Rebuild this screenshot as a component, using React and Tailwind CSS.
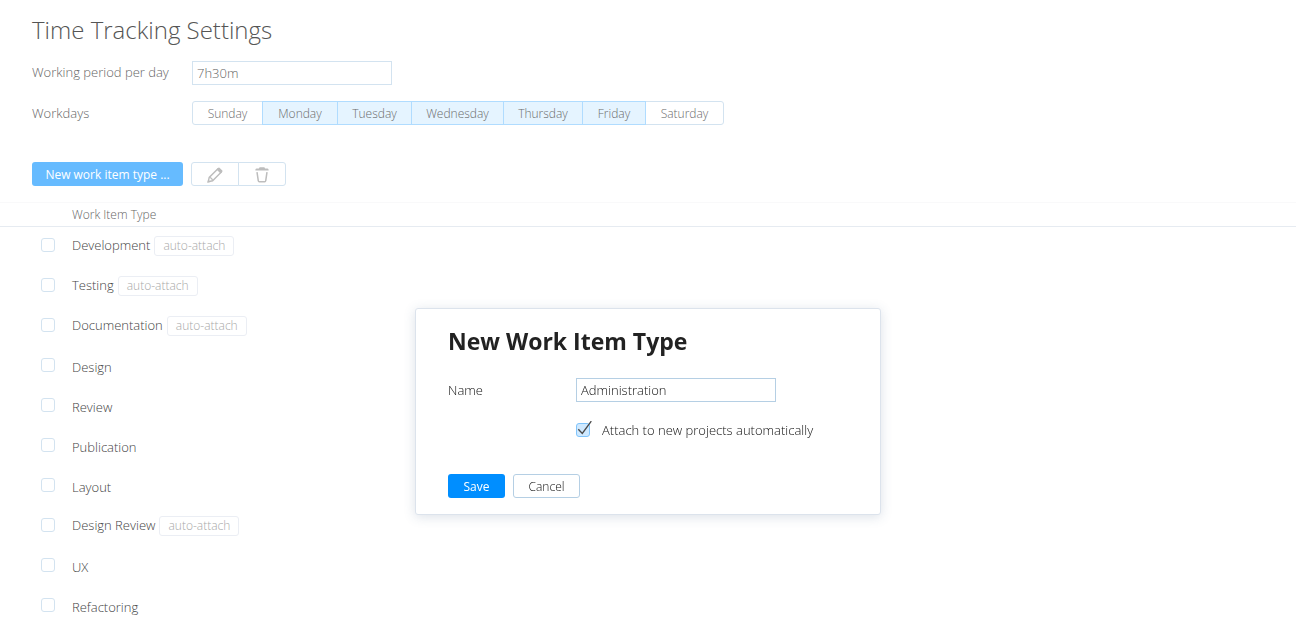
import { useState } from 'react';

const DAYS = [
  { name: 'Sunday', width: 'w-[71px]' },
  { name: 'Monday', width: 'w-[76px]' },
  { name: 'Tuesday', width: 'w-[75px]' },
  { name: 'Wednesday', width: 'w-[93px]' },
  { name: 'Thursday', width: 'w-[80px]' },
  { name: 'Friday', width: 'w-[64px]' },
  { name: 'Saturday', width: 'w-[79px]' },
];

const ITEM_TYPES = [
  { name: 'Development', auto: true },
  { name: 'Testing', auto: true },
  { name: 'Documentation', auto: true },
  { name: 'Design', auto: false },
  { name: 'Review', auto: false },
  { name: 'Publication', auto: false },
  { name: 'Layout', auto: false },
  { name: 'Design Review', auto: true },
  { name: 'UX', auto: false },
  { name: 'Refactoring', auto: false },
];

function PencilIcon() {
  return (
    <svg viewBox="0 0 16 16" className="size-4" fill="none" stroke="#bdbdbd" strokeWidth="1.4" aria-hidden="true">
      <path d="M1.200 14.800l1-4.400L10.700 1.900 14.100 5.300 5.600 13.800z" />
      <path d="M2.400 10.400Q5 10.800 5.600 13.600" strokeWidth="1.200" />
      <path d="M9.500 2.500L11.300.7q.6-.6 1.200 0l2.800 2.800q.6.600 0 1.200L13.500 6.500z" fill="#bdbdbd" stroke="none" />
      <path d="M.4 15.600l.7-3 2.300 2.300z" fill="#bdbdbd" stroke="none" />
    </svg>
  );
}

function TrashIcon() {
  return (
    <svg viewBox="0 0 16 16" className="size-4" fill="none" stroke="#bdbdbd" aria-hidden="true">
      <path d="M5 1.500Q5 .3 6.200.3h3.600Q11 .3 11 1.500h2.500q1.200 0 1.200 2H1.300q0-2 1.200-2z" fill="#bdbdbd" stroke="none" />
      <path d="M3 5.200l1.300 8.600q.1 1 1 1h5.400q.9 0 1-1L13 5.200" strokeWidth="1.500" />
    </svg>
  );
}

function Workdays() {
  const [selected, setSelected] = useState(['Monday', 'Tuesday', 'Wednesday', 'Thursday', 'Friday']);
  const toggle = (day) =>
    setSelected((days) => (days.includes(day) ? days.filter((d) => d !== day) : [...days, day]));

  return (
    <div role="group" aria-labelledby="workdays" className="flex">
      {DAYS.map(({ name, width }) => {
        const on = selected.includes(name);
        return (
          <button
            key={name}
            type="button"
            aria-pressed={on}
            onClick={() => toggle(name)}
            className={`-ml-px h-6 border pt-px text-xs text-[#6c6c6c] first:ml-0 first:rounded-l-[3px] last:rounded-r-[3px] ${width} ${
              on ? 'relative border-[#b0dcff] bg-[#e5f4ff]' : 'border-[#d3e3f0] bg-white'
            }`}
          >
            {name}
          </button>
        );
      })}
    </div>
  );
}

function ItemTypesTable() {
  return (
    <table className="mt-4 w-full border-collapse text-left">
      <thead>
        <tr className="h-6 border-t border-b border-t-[#f9f9fa] border-b-[#e6ebf1]">
          <th className="w-[72px]" aria-label="Select" />
          <th className="text-xs font-light text-[#666]">Work Item Type</th>
        </tr>
      </thead>
      <tbody>
        {ITEM_TYPES.map(({ name, auto }) => (
          <tr key={name} className="h-10 align-top">
            <td className="pt-[11px] pl-[41px]">
              <input
                type="checkbox"
                aria-label={name}
                className="block size-[14px] appearance-none rounded-[3px] border border-[#d3e3f0] bg-white checked:bg-[#cfe9ff]"
              />
            </td>
            <td className={auto ? 'pt-[9px]' : 'pt-[10px]'}>
              <div className="flex h-5 items-start gap-1">
                <span className={`text-[13px] text-[#444] ${auto ? 'leading-[18px]' : 'leading-5'}`}>{name}</span>
                {auto && (
                  <span className="flex h-5 items-center rounded-[3px] border border-[#ebeef4] px-2 text-xs text-[#a8a8a8]">
                    auto-attach
                  </span>
                )}
              </div>
            </td>
          </tr>
        ))}
      </tbody>
    </table>
  );
}

function NewTypeDialog() {
  return (
    <div className="pointer-events-none fixed inset-0 flex items-start justify-center pt-[308px]">
      <form
        role="dialog"
        aria-labelledby="dialog-title"
        onSubmit={(e) => e.preventDefault()}
        className="pointer-events-auto w-[466px] rounded-[3px] border border-[#dce3ec] bg-white px-8 pt-4 pb-4 text-[13px] text-[#111] shadow-[0_2px_12px_rgba(60,90,130,0.18)]"
      >
        <h2 id="dialog-title" className="text-[23px] leading-8 font-bold text-[#222]">
          New Work Item Type
        </h2>
        <div className="mt-[21px] flex items-center">
          <label htmlFor="type-name" className="w-32 pt-px">
            Name
          </label>
          <input
            id="type-name"
            defaultValue="Administration"
            className="h-6 w-[200px] border border-[#b5cfe4] bg-white px-1 outline-none"
          />
        </div>
        <div className="mt-4 ml-32 flex h-6 items-center">
          <span className="relative flex">
            <input
              id="auto-attach"
              type="checkbox"
              defaultChecked
              className="peer size-[14px] appearance-none rounded-[3px] border border-[#80c4fb] bg-[#cfe9ff]"
            />
            <svg
              viewBox="0 0 16 16"
              className="pointer-events-none absolute bottom-0 left-0 hidden size-4 peer-checked:block"
              fill="none"
              stroke="#4a4a4a"
              strokeWidth="1.400"
              aria-hidden="true"
            >
              <path d="M2.300 8.300l4 4.200L15.300.2" />
            </svg>
          </span>
          <label htmlFor="auto-attach" className="pt-px pl-3">
            Attach to new projects automatically
          </label>
        </div>
        <div className="mt-8 flex gap-2 text-xs">
          <button type="submit" className="h-6 w-[57px] rounded-[3px] bg-[#008eff] pt-px font-normal text-white">
            Save
          </button>
          <button type="button" className="h-6 w-[67px] rounded-[3px] border border-[#b5cfe4] bg-white pt-px">
            Cancel
          </button>
        </div>
      </form>
    </div>
  );
}

export default function App() {
  return (
    <main className="min-h-screen bg-white font-['Open_Sans','Noto_Sans',sans-serif] font-light">
      <div className="px-8 pt-3 text-[13px] text-[#666]">
        <h1 className="text-2xl leading-9 text-[#555]">Time Tracking Settings</h1>
        <div className="mt-[13px] flex items-center">
          <label htmlFor="period" className="w-40">
            Working period per day
          </label>
          <input
            id="period"
            defaultValue="7h30m"
            className="h-6 w-[200px] border border-[#d3e3f0] bg-white px-1 outline-none"
          />
        </div>
        <div className="mt-4 flex items-center">
          <span id="workdays" className="w-40 pt-px">
            Workdays
          </span>
          <Workdays />
        </div>
        <div className="mt-[37px] flex gap-2">
          <button type="button" className="h-6 w-[151px] rounded-[3px] bg-[#66bbff] pt-px text-xs font-normal text-white">
            New work item type ...
          </button>
          <div className="flex">
            <button
              type="button"
              aria-label="Edit"
              className="flex h-6 w-12 items-center justify-center rounded-l-[3px] border border-[#d3e3f0] bg-white pt-px"
            >
              <PencilIcon />
            </button>
            <button
              type="button"
              aria-label="Delete"
              className="-ml-px flex h-6 w-12 items-center justify-center rounded-r-[3px] border border-[#d3e3f0] bg-white pt-px"
            >
              <TrashIcon />
            </button>
          </div>
        </div>
      </div>
      <ItemTypesTable />
      <NewTypeDialog />
    </main>
  );
}
